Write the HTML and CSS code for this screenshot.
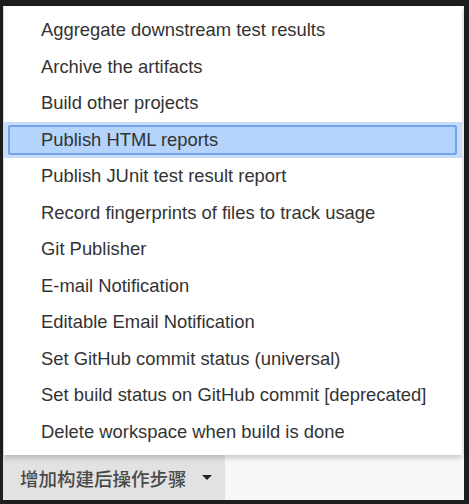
FILE: index.html
```html
<!DOCTYPE html>
<html lang="zh-CN">

<head>
    <meta charset="UTF-8">
    <meta name="viewport" content="width=device-width, initial-scale=1.0">
    <title>Post-build Actions</title>
    <link rel="stylesheet" href="styles.css">
</head>

<body>
    <div class="frame">
        <div class="page">
            <ul class="menu">
                <li class="menu-item">Aggregate downstream test results</li>
                <li class="menu-item">Archive the artifacts</li>
                <li class="menu-item">Build other projects</li>
                <li class="menu-item selected"><span class="item-inner">Publish HTML reports</span></li>
                <li class="menu-item">Publish JUnit test result report</li>
                <li class="menu-item">Record fingerprints of files to track usage</li>
                <li class="menu-item">Git Publisher</li>
                <li class="menu-item">E-mail Notification</li>
                <li class="menu-item">Editable Email Notification</li>
                <li class="menu-item">Set GitHub commit status (universal)</li>
                <li class="menu-item">Set build status on GitHub commit [deprecated]</li>
                <li class="menu-item">Delete workspace when build is done</li>
            </ul>

            <div class="actions">
                <button class="add-btn" type="button">
                    增加构建后操作步骤
                    <span class="caret"></span>
                </button>
            </div>
        </div>
    </div>
</body>

</html>
```

FILE: styles.css
```css
* {
    margin: 0;
    padding: 0;
    box-sizing: border-box;
}

body {
    background-color: #1e1e1e;
    font-family: 'Liberation Sans', Arial, 'Noto Sans CJK SC', sans-serif;
}

.frame {
    width: 469px;
    height: 504px;
    padding: 6px 5px 4px 3px;
}

.page {
    background-color: #f8f8f8;
    height: 100%;
    display: flex;
    flex-direction: column;
}

.menu {
    list-style: none;
    background-color: white;
    width: 459px;
    height: 449px;
    padding: 6px 0 5px;
    border-left: 1px solid #d8d8d8;
    box-shadow: 0 3px 6px rgba(0, 0, 0, 0.2);
    position: relative;
    z-index: 1;
}

.menu-item {
    height: 36.5px;
    display: flex;
    align-items: center;
    padding-left: 37px;
    font-size: 18.4px;
    color: #333;
    white-space: nowrap;
}

.menu-item.selected {
    background-color: #c6dcf9;
    padding: 3px 5px 3px 4px;
}

.item-inner {
    flex: 1;
    height: 100%;
    display: flex;
    align-items: center;
    padding-left: 31px;
    background-color: #b4d4fc;
    border: 2px solid #72a3ee;
    border-radius: 2px;
}

.actions {
    flex: 1;
    display: flex;
}

.add-btn {
    width: 222px;
    background-color: #e2e2e2;
    border: none;
    display: flex;
    align-items: center;
    padding-left: 17px;
    font-family: 'Noto Sans CJK SC', sans-serif;
    font-size: 18.5px;
    font-weight: 500;
    color: #4a4a4a;
}

.caret {
    width: 0;
    height: 0;
    margin-left: 15px;
    border-left: 5px solid transparent;
    border-right: 5px solid transparent;
    border-top: 5px solid #222;
}
```
